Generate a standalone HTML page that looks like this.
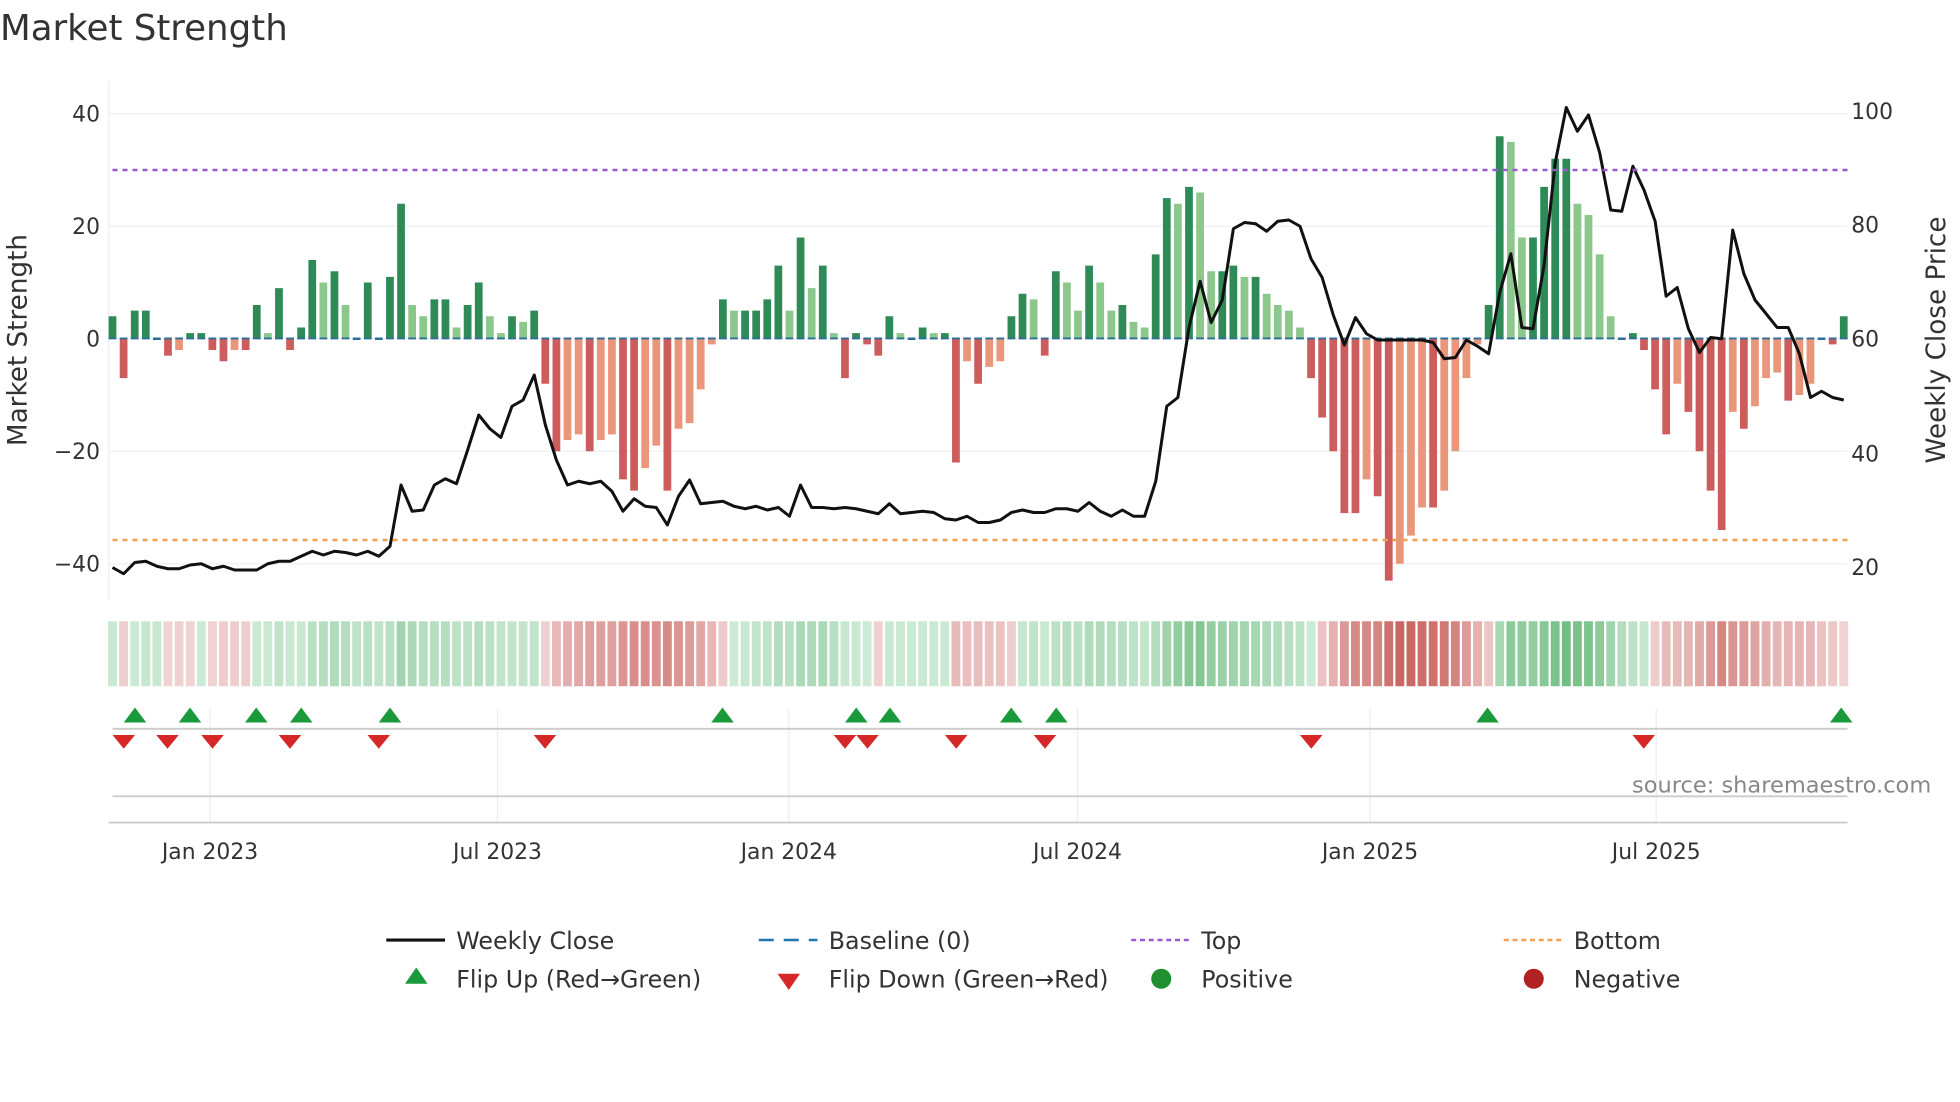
<!DOCTYPE html>
<html><head><meta charset="utf-8"><style>
html,body{margin:0;padding:0;background:#fff;width:1960px;height:1102px;overflow:hidden}
svg{display:block;font-family:"DejaVu Sans","Liberation Sans",sans-serif}
</style></head><body>
<svg id="s" width="1960" height="1102" viewBox="0 0 1568 881.6" xmlns="http://www.w3.org/2000/svg">
<text x="0" y="32" font-size="28.5" fill="#333">Market Strength</text>
<g id="grid"></g>
<g id="bars"></g>
<g id="heat"></g>
<polyline id="line" fill="none" stroke="#111" stroke-width="2.4" stroke-linejoin="round"/>
<line x1="90" y1="136" x2="1478" y2="136" stroke="#9b59d0" stroke-width="2" stroke-dasharray="4,4"/>
<line x1="90" y1="432" x2="1478" y2="432" stroke="#f0a050" stroke-width="2" stroke-dasharray="4,4"/>
<g id="mk"></g>
<g font-size="17.5" fill="#333">
<text x="80" y="97" text-anchor="end">40</text>
<text x="80" y="187" text-anchor="end">20</text>
<text x="80" y="277" text-anchor="end">0</text>
<text x="80" y="367" text-anchor="end">−20</text>
<text x="80" y="457" text-anchor="end">−40</text>
<text x="1481" y="95">100</text>
<text x="1481" y="186">80</text>
<text x="1481" y="277">60</text>
<text x="1481" y="369">40</text>
<text x="1481" y="460">20</text>
<text x="168" y="687" text-anchor="middle">Jan 2023</text>
<text x="398" y="687" text-anchor="middle">Jul 2023</text>
<text x="631" y="687" text-anchor="middle">Jan 2024</text>
<text x="862" y="687" text-anchor="middle">Jul 2024</text>
<text x="1096" y="687" text-anchor="middle">Jan 2025</text>
<text x="1325" y="687" text-anchor="middle">Jul 2025</text>
</g>
<text transform="translate(21,272) rotate(-90)" font-size="21" fill="#333" text-anchor="middle">Market Strength</text>
<text transform="translate(1556,272) rotate(-90)" font-size="21" fill="#333" text-anchor="middle">Weekly Close Price</text>
<text x="1545" y="634" font-size="18" fill="#888" text-anchor="end">source: sharemaestro.com</text>
<g font-size="19" fill="#333">
<line x1="309" y1="752" x2="356" y2="752" stroke="#111" stroke-width="2.5"/><text x="365" y="759">Weekly Close</text>
<line x1="607" y1="752" x2="654" y2="752" stroke="#1f77b4" stroke-width="2" stroke-dasharray="12,8"/><text x="663" y="759">Baseline (0)</text>
<line x1="905" y1="752" x2="952" y2="752" stroke="#9b59d0" stroke-width="2" stroke-dasharray="4,3"/><text x="961" y="759">Top</text>
<line x1="1203" y1="752" x2="1250" y2="752" stroke="#f0a050" stroke-width="2" stroke-dasharray="4,3"/><text x="1259" y="759">Bottom</text>
<polygon points="333,774 324,787 342,787" fill="#1a9a3a"/><text x="365" y="790">Flip Up (Red→Green)</text>
<polygon points="622,779 640,779 631,792" fill="#d62728"/><text x="663" y="790">Flip Down (Green→Red)</text>
<circle cx="929" cy="783" r="8" fill="#1f8f2f"/><text x="961" y="790">Positive</text>
<circle cx="1227" cy="783" r="8" fill="#b22222"/><text x="1259" y="790">Negative</text>
</g>
</svg>
<script>
var V=[4,-7,5,5,0,-3,-2,1,1,-2,-4,-2,-2,6,1,9,-2,2,14,10,12,6,0,10,0,11,24,6,4,7,7,2,6,10,4,1,4,3,5,-8,-20,-18,-17,-20,-18,-17,-25,-27,-23,-19,-27,-16,-15,-9,-1,7,5,5,5,7,13,5,18,9,13,1,-7,1,-1,-3,4,1,0,2,1,1,-22,-4,-8,-5,-4,4,8,7,-3,12,10,5,13,10,5,6,3,2,15,25,24,27,26,12,12,13,11,11,8,6,5,2,-7,-14,-20,-31,-31,-25,-28,-43,-40,-35,-30,-30,-27,-20,-7,-1,6,36,35,18,18,27,32,32,24,22,15,4,0,1,-2,-9,-17,-8,-13,-20,-27,-34,-13,-16,-12,-7,-6,-11,-10,-8,0,-1,4];
var L=[454,459,450,449,453,455,455,452,451,455,453,456,456,456,451,449,449,445,441,444,441,442,444,441,445,437,388,409,408,388,383,387,360,332,343,350,325,320,300,340,368,388,385,387,385,393,409,399,405,406,420,397,384,403,402,401,405,407,405,408,406,413,388,406,406,407,406,407,409,411,403,411,410,409,410,415,416,413,418,418,416,410,408,410,410,407,407,409,402,409,413,408,413,413,385,325,318,262,225,258,240,183,178,179,185,177,176,181,207,222,252,276,254,267,272,272,272,272,272,274,287,286,272,277,283,234,203,262,263,212,130,86,105,92,122,168,169,133,152,177,237,230,263,282,270,271,184,219,240,251,262,262,283,318,313,318,320];
var NS="http://www.w3.org/2000/svg";
function el(p,t,a){var e=document.createElementNS(NS,t);for(var k in a)e.setAttribute(k,a[k]);document.getElementById(p).appendChild(e);return e;}
var step=(1475-90)/(V.length-1);
function X(i){return 90+i*step;}
[91,181,271,361,451].forEach(function(y){el("grid","line",{x1:87,x2:1478,y1:y,y2:y,stroke:"#eef0f2","stroke-width":1});});
el("grid","line",{x1:87,x2:87,y1:65,y2:480,stroke:"#eee"});
[168,398,631,862,1096,1325].forEach(function(x){el("grid","line",{x1:x,x2:x,y1:567,y2:658,stroke:"#eee"});});
el("grid","line",{x1:90,x2:1478,y1:583,y2:583,stroke:"#ccc","stroke-width":1.5});
el("grid","line",{x1:90,x2:1478,y1:637,y2:637,stroke:"#ccc","stroke-width":1.5});
el("grid","line",{x1:87,x2:1478,y1:658,y2:658,stroke:"#ccc","stroke-width":1.5});
var s=0;
for(var i=0;i<V.length;i++){
 var v=V[i],p=i?V[i-1]:0,x=X(i),w=6.2,c;
 if(v>=0)c=(v>=p)?"#2e8b57":"#8cc78c";else c=(v<=p)?"#cd5c5c":"#e9967a";
 if(v==0){el("bars","rect",{x:x-w/2,y:270,width:w,height:2,fill:"#2c6e99"});}
 else{var h=Math.abs(v)*4.5;el("bars","rect",{x:x-w/2,y:v>0?271-h:271,width:w,height:h,fill:c});el("bars","rect",{x:x-w/2,y:270,width:w,height:1.5,fill:"#2c6e99"});}
 s=s*0.6+v*0.4;
 var t=Math.min(0.95,0.05+Math.abs(s)/42),hc;
 if(s>=0){hc="rgb("+Math.round(212-(212-80)*t)+","+Math.round(238-(238-172)*t)+","+Math.round(220-(220-100)*t)+")";}
 else{hc="rgb("+Math.round(242-(242-198)*t)+","+Math.round(218-(218-90)*t)+","+Math.round(218-(218-85)*t)+")";}
 el("heat","rect",{x:x-step/2+0.9,y:497,width:step-1.8,height:52,fill:hc});
}
var pts=L.map(function(y,i){return X(i).toFixed(1)+","+y;}).join(" ");
document.getElementById("line").setAttribute("points",pts);
[108,152,205,241,312,578,685,712,809,845,1190,1473].forEach(function(x){el("mk","polygon",{points:(x)+",566 "+(x-9)+",578 "+(x+9)+",578",fill:"#1a9a3a"});});
[99,134,170,232,303,436,676,694,765,836,1049,1315].forEach(function(x){el("mk","polygon",{points:(x-9)+",588 "+(x+9)+",588 "+x+",599",fill:"#d62728"});});
</script>
</body></html>
